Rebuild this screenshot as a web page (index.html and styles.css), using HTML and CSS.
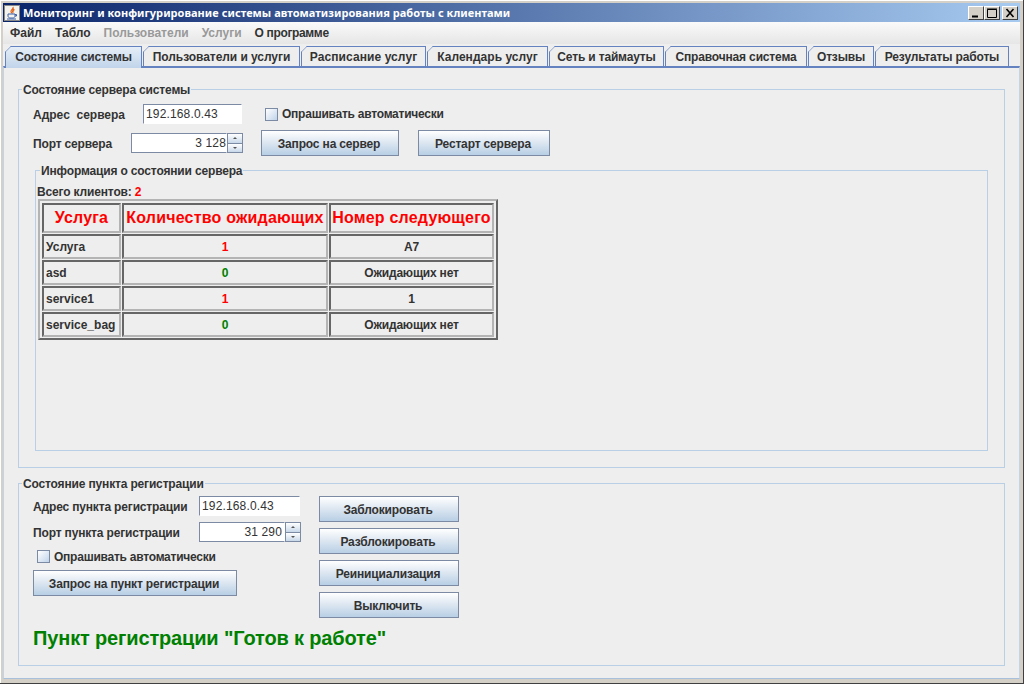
FILE: index.html
```html
<!DOCTYPE html>
<html lang="ru">
<head>
    <meta charset="UTF-8">
    <title>Мониторинг и конфигурирование</title>
    <link rel="stylesheet" href="styles.css">
</head>
<body>
<div class="window">
    <div class="titlebar">
        <svg class="java-icon" width="16" height="16" viewBox="0 0 16 16">
            <rect x="0.5" y="0.5" width="15" height="15" fill="#f4f2ec" stroke="#8a8a8a"/>
            <path d="M9 2c1 2-3 3-2 5 .3.7 1 1 1 1-.5-1.500 2.500-2.500 1-6zM10.500 4.500c-1.500 1-2 1.500-1 3" fill="none" stroke="#e0641e" stroke-width="1.100"/>
            <path d="M4 9h7v2c0 1-1 2-2 2H6c-1 0-2-1-2-2zM11 9.500h1.500v1.500H11" fill="none" stroke="#3a5fa8" stroke-width="1"/>
            <path d="M3 14h9" stroke="#3a5fa8"/>
        </svg>
        <span class="title-text">Мониторинг и конфигурирование системы автоматизирования работы с клиентами</span>
        <div class="win-buttons">
            <div class="win-btn"><svg width="14" height="12" viewBox="0 0 14 12"><path d="M3 9.500h6" stroke="#000" stroke-width="2"/></svg></div>
            <div class="win-btn"><svg width="14" height="12" viewBox="0 0 14 12"><path d="M2.500 2.500h9v8h-9z M2 2h10" fill="none" stroke="#000"/></svg></div>
            <div class="win-btn win-close"><svg width="14" height="12" viewBox="0 0 14 12"><path d="M3.500 2l7 8M10.500 2l-7 8" stroke="#000" stroke-width="1.600"/></svg></div>
        </div>
    </div>

    <div class="menubar">
        <span class="menu-item">Файл</span>
        <span class="menu-item">Табло</span>
        <span class="menu-item disabled">Пользователи</span>
        <span class="menu-item disabled">Услуги</span>
        <span class="menu-item menu-about">О программе</span>
    </div>

    <div class="tabs">
        <div class="tab active">Состояние системы</div>
        <div class="tab">Пользователи и услуги</div>
        <div class="tab">Расписание услуг</div>
        <div class="tab">Календарь услуг</div>
        <div class="tab">Сеть и таймауты</div>
        <div class="tab">Справочная система</div>
        <div class="tab">Отзывы</div>
        <div class="tab">Результаты работы</div>
    </div>

    <div class="pane">
        <fieldset class="group server-group">
            <legend>Состояние сервера системы</legend>
            <div class="row">
                <label class="label server-label">Адрес&nbsp; сервера</label>
                <div class="field server-address">192.168.0.43</div>
                <div class="check server-check"><span class="check-box"></span>Опрашивать автоматически</div>
            </div>
            <div class="row row-buttons">
                <label class="label port-label">Порт сервера</label>
                <div class="spinner server-port">
                    <div class="field spin-value">3 128</div>
                    <div class="spin-arrows"><span class="up"></span><span class="down"></span></div>
                </div>
                <button class="btn btn-request">Запрос на сервер</button>
                <button class="btn btn-restart">Рестарт сервера</button>
            </div>

            <fieldset class="group info-group">
                <legend>Информация о состоянии сервера</legend>
                <div class="clients">Всего клиентов: <span class="red">2</span></div>
                <table class="status-table">
                    <thead>
                        <tr><th class="col-service">Услуга</th><th class="col-count">Количество ожидающих</th><th class="col-next">Номер следующего</th></tr>
                    </thead>
                    <tbody>
                        <tr><td class="name">Услуга</td><td class="red">1</td><td>А7</td></tr>
                        <tr><td class="name">asd</td><td class="green">0</td><td>Ожидающих нет</td></tr>
                        <tr><td class="name">service1</td><td class="red">1</td><td>1</td></tr>
                        <tr><td class="name">service_bag</td><td class="green">0</td><td>Ожидающих нет</td></tr>
                    </tbody>
                </table>
            </fieldset>
        </fieldset>

        <fieldset class="group point-group">
            <legend>Состояние пункта регистрации</legend>
            <div class="point-columns">
                <div class="point-left">
                    <div class="row">
                        <label class="label point-label">Адрес пункта регистрации</label>
                        <div class="field point-address">192.168.0.43</div>
                    </div>
                    <div class="row row-port">
                        <label class="label point-label">Порт пункта регистрации</label>
                        <div class="spinner point-port">
                            <div class="field spin-value">31 290</div>
                            <div class="spin-arrows"><span class="up"></span><span class="down"></span></div>
                        </div>
                    </div>
                    <div class="check point-check"><span class="check-box"></span>Опрашивать автоматически</div>
                    <button class="btn btn-point">Запрос на пункт регистрации</button>
                </div>
                <div class="point-right">
                    <button class="btn btn-side">Заблокировать</button>
                    <button class="btn btn-side">Разблокировать</button>
                    <button class="btn btn-side">Реинициализация</button>
                    <button class="btn btn-side">Выключить</button>
                </div>
            </div>
            <div class="point-status">Пункт регистрации "Готов к работе"</div>
        </fieldset>
    </div>
</div>
</body>
</html>
```

FILE: styles.css
```css
* {
    box-sizing: border-box;
}
html, body {
    margin: 0;
    padding: 0;
}
body {
    width: 1024px;
    height: 684px;
    overflow: hidden;
    font-family: "Liberation Sans", Arial, sans-serif;
    font-size: 12px;
    font-weight: bold;
    letter-spacing: -0.16px;
    color: #333;
}
.window {
    display: flex;
    flex-direction: column;
    width: 1024px;
    height: 684px;
    padding: 3px 3px 4px 3px;
    background: #d4d0c8;
    border-right: 1px solid #404040;
    border-bottom: 1px solid #404040;
    box-shadow: inset 1px 1px 0 #fff;
}

/* title bar */
.titlebar {
    display: flex;
    align-items: center;
    height: 19px;
    flex: none;
    padding-left: 1px;
    background: linear-gradient(to right, #0a246a, #a6caf0);
}
.java-icon {
    flex: none;
}
.title-text {
    margin-left: 3px;
    font-family: "Noto Sans", sans-serif;
    font-size: 11px;
    letter-spacing: 0.03px;
    color: #fff;
    white-space: nowrap;
}
.win-buttons {
    display: flex;
    margin-left: auto;
    margin-right: 2px;
}
.win-btn {
    width: 16px;
    height: 14px;
    background: #d4d0c8;
    border: 1px solid;
    border-color: #fff #404040 #404040 #fff;
}
.win-btn svg {
    display: block;
}
.win-close {
    margin-left: 2px;
}

/* menu */
.menubar {
    display: flex;
    align-items: center;
    height: 22px;
    flex: none;
    padding-left: 0.5px;
    letter-spacing: 0;
    background: linear-gradient(to bottom, #fafafa, #e6e6e6);
}
.menu-item {
    padding: 0 6.5px;
}
.menu-item.disabled {
    color: #999;
}
.menu-about {
    letter-spacing: -0.35px;
}

/* tabs */
.tabs {
    display: flex;
    height: 22px;
    flex: none;
    padding: 2px 0 0 2px;
    background: #eee;
}
.tab {
    position: relative;
    height: 20px;
    padding-top: 3px;
    margin-right: 1px;
    border: 1px solid #6382bf;
    border-bottom: none;
    background: #eee;
    clip-path: polygon(0 6px, 6px 0, 100% 0, 100% 100%, 0 100%);
    text-align: center;
    white-space: nowrap;
}
.tab::before {
    content: "";
    position: absolute;
    left: -2px;
    top: 1px;
    width: 9px;
    height: 1px;
    background: #6382bf;
    transform: rotate(-45deg);
}
.tab:nth-child(1) { width: 137px; }
.tab:nth-child(2) { width: 157px; letter-spacing: -0.06px; }
.tab:nth-child(3) { width: 125px; letter-spacing: 0.09px; }
.tab:nth-child(4) { width: 121px; letter-spacing: 0.04px; }
.tab:nth-child(5) { width: 115px; }
.tab:nth-child(6) { width: 142px; }
.tab:nth-child(7) { width: 66px; }
.tab:nth-child(8) { width: 134px; }
.tab.active {
    z-index: 1;
    height: 22px;
    border-bottom: none;
    background: linear-gradient(to bottom, #e6eef7, #c0d4ea);
}
.pane {
    flex: 1;
    padding: 14px 14px 0 14px;
    background: #eee;
    border-top: 2px solid #6382bf;
    border-left: 1px solid #c3d4e6;
    border-right: 1px solid #c3d4e6;
    border-bottom: 1px solid #a8c0dc;
}

/* groups */
.group {
    margin: 0;
    padding: 0;
    min-width: 0;
    border: 1px solid #b8cfe5;
}
.group legend {
    height: 14px;
    padding: 0 1px;
    line-height: 16px;
}
.server-group {
    height: 386px;
    padding: 8px 0 0 14px;
}
.server-group > legend,
.point-group > legend {
    margin-left: -11px;
}
.info-group {
    width: 953px;
    height: 288px;
    margin: 7px 0 0 2px;
    padding: 7px 0 0 1px;
}
.info-group > legend {
    margin-left: 3px;
}
.point-group {
    height: 190px;
    margin-top: 8px;
    padding: 6px 0 0 14px;
}

/* form rows */
.row {
    display: flex;
    align-items: center;
}
.row-buttons {
    margin-top: 6px;
    height: 26px;
}
.row-port {
    margin-top: 6px;
}
.label {
    padding-top: 2px;
    white-space: nowrap;
}
.server-label {
    width: 110px;
    letter-spacing: 0;
}
.port-label {
    width: 98px;
}
.point-label {
    width: 166px;
}
.field {
    height: 20px;
    padding: 0 2px;
    line-height: 18px;
    font-weight: normal;
    letter-spacing: 0.15px;
    background: #fff;
    border: 1px solid;
    border-color: #7c8ba3 #fff #fff #7c8ba3;
    white-space: nowrap;
}
.server-address {
    width: 99px;
}
.point-address {
    width: 101px;
}
.spinner {
    display: flex;
    height: 20px;
}
.server-port {
    width: 112px;
}
.point-port {
    width: 102px;
}
.spin-value {
    flex: 1;
    padding-right: 0;
    text-align: right;
    border-bottom-color: #7c8ba3;
}
.point-port .spin-value {
    padding-right: 2px;
}
.spin-arrows {
    display: flex;
    flex-direction: column;
    width: 16px;
}
.spin-arrows span {
    position: relative;
    flex: 1;
    background: linear-gradient(to bottom, #fff, #c8d8ea);
    border: 1px solid #7c8ba3;
}
.spin-arrows .down {
    border-top: none;
}
.spin-arrows span::after {
    content: "";
    position: absolute;
    left: 5px;
    top: 3px;
    border-left: 2px solid transparent;
    border-right: 2px solid transparent;
}
.spin-arrows .up::after {
    border-bottom: 2px solid #555;
}
.spin-arrows .down::after {
    border-top: 2px solid #555;
}
.check {
    display: flex;
    align-items: center;
    letter-spacing: -0.24px;
    white-space: nowrap;
}
.check-box {
    width: 13px;
    height: 13px;
    margin-right: 4px;
    background: linear-gradient(135deg, #fff, #c0d4ea);
    border: 1px solid #7c8ba3;
}
.server-check {
    margin-left: 23px;
}
.point-check {
    margin: 8px 0 0 4px;
    height: 13px;
}

/* buttons */
.btn {
    display: block;
    height: 26px;
    padding: 2px 2px 0 0;
    font: inherit;
    letter-spacing: inherit;
    color: #333;
    background: linear-gradient(to bottom, #fff, #dfe8f2 45%, #b8cfe5);
    border: 1px solid #7c8ba3;
}
.btn-request {
    width: 138px;
    margin-left: 18px;
}
.btn-restart {
    width: 132px;
    margin-left: 19px;
}
.btn-point {
    width: 204px;
    margin-top: 7px;
}
.btn-side {
    width: 140px;
}
.point-columns {
    display: flex;
}
.point-left {
    width: 286px;
}
.point-right {
    display: flex;
    flex-direction: column;
    gap: 6px;
}
.point-status {
    margin-top: 8px;
    font-size: 20px;
    line-height: 24px;
    letter-spacing: -0.15px;
    color: #008000;
}

/* server table */
.clients {
    height: 14px;
    line-height: 16px;
}
.red {
    color: #f00;
}
.green {
    color: #008000;
}
.status-table {
    width: 460px;
    margin: 1px 0 0 1px;
    border-collapse: separate;
    border-spacing: 1px;
    table-layout: fixed;
    border: 2px solid;
    border-color: #b4b4b4 #666 #666 #b4b4b4;
    padding: 1px 1px 0 1px;
}
.status-table th,
.status-table td {
    padding: 0;
    text-align: center;
    border: 2px solid;
    border-color: #666 #b4b4b4 #b4b4b4 #666;
    white-space: nowrap;
}
.status-table th {
    height: 30px;
    font-size: 16px;
    letter-spacing: 0.2px;
    color: #f00;
}
.status-table td {
    height: 25px;
    letter-spacing: -0.2px;
}
.status-table td.name {
    padding-left: 2px;
    letter-spacing: 0;
    text-align: left;
}
.status-table td.red {
    color: #f00;
}
.status-table td.green {
    color: #008000;
}
.col-service {
    width: 79px;
}
.col-count {
    width: 206px;
}
```
